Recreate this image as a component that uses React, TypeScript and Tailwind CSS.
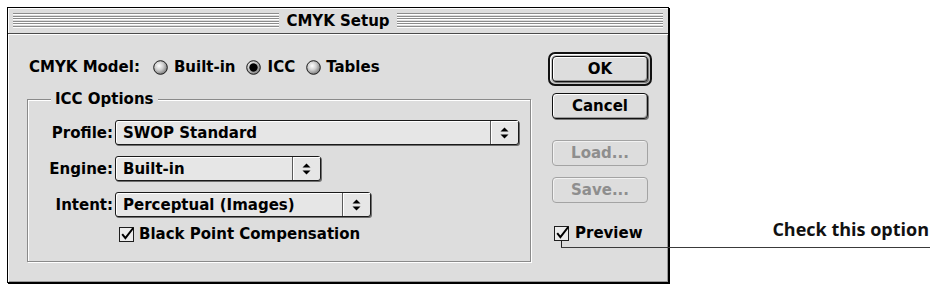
import React from "react";

const sysFont = "[font-family:'DejaVu_Sans',sans-serif] font-bold text-[15px] leading-[18px]";

function Radio({ checked, id }: { checked?: boolean; id: string }) {
  return (
    <svg width="15" height="15" viewBox="0 0 15 15" className="shrink-0">
      <defs>
        <radialGradient id={id} cx="40%" cy="38%" r="68%">
          <stop offset="0" stopColor="#ffffff" />
          <stop offset="0.45" stopColor="#d0d0d0" />
          <stop offset="1" stopColor="#6f6f6f" />
        </radialGradient>
      </defs>
      <circle cx="7.5" cy="7.5" r="6.8" fill={`url(#${id})`} stroke="#1a1a1a" strokeWidth="1" />
      {checked && <circle cx="7.5" cy="7.5" r="4.2" fill="#000" />}
    </svg>
  );
}

function CheckBox() {
  return (
    <svg width="16" height="16" viewBox="0 0 16 16" className="shrink-0">
      <rect x="0.5" y="1.5" width="14" height="14" fill="#ececec" stroke="#1e1e1e" />
      <path d="M3.2 8.2 L6.4 12.2 L14.2 2" fill="none" stroke="#000" strokeWidth="2" />
    </svg>
  );
}

function Arrows() {
  return (
    <svg width="9" height="12" viewBox="0 0 9 12">
      <path d="M0.5 4.5 L4.5 0.5 L8.5 4.5 Z" fill="#000" />
      <path d="M0.5 7.5 L4.5 11.5 L8.5 7.5 Z" fill="#000" />
    </svg>
  );
}

function Popup({ label, className }: { label: string; className: string }) {
  return (
    <div
      className={`flex h-[25px] items-stretch rounded-[3px] border border-[#1a1a1a] bg-[#e6e6e6] shadow-[1px_1px_0_#6e6e6e,inset_1px_1px_0_#ffffff] ${className}`}
    >
      <div className={`flex flex-1 items-center pl-[7px] text-black ${sysFont}`}>{label}</div>
      <div className="flex w-[28px] items-center justify-center border-l border-[#5a5a5a] shadow-[inset_1px_1px_0_#ffffff]">
        <Arrows />
      </div>
    </div>
  );
}

function Btn({ children, disabled }: { children: React.ReactNode; disabled?: boolean }) {
  return disabled ? (
    <div
      className={`flex h-[26px] w-[96px] items-center justify-center rounded-[4px] border border-[#a3a3a3] bg-[#dddddd] text-[#8e8e8e] shadow-[inset_1px_1px_0_#f2f2f2] ${sysFont}`}
    >
      {children}
    </div>
  ) : (
    <div
      className={`flex h-[26px] w-[96px] items-center justify-center rounded-[4px] border border-[#111111] bg-[#dddddd] text-black shadow-[inset_1px_1px_0_#ffffff,inset_-1px_-1px_0_#9a9a9a,1px_1px_0_#777777] ${sysFont}`}
    >
      {children}
    </div>
  );
}

function Stripes() {
  const rows = [0, 1, 2, 3, 4, 5];
  return (
    <div className="flex flex-1 flex-col">
      {rows.map((i) => (
        <div
          key={i}
          className={`h-[1px] bg-[#8c8c8c] shadow-[0_1px_0_#ffffff] ${i % 2 === 0 ? "mb-[2px]" : "mb-[1px]"}`}
        />
      ))}
    </div>
  );
}

export default function App() {
  return (
    <div className="min-h-screen bg-white">
      <div className="relative flex pl-[7px] pt-[7px]">
        {/* Window */}
        <div className="flex h-[276px] w-[662px] flex-col border border-black bg-[#dddddd] shadow-[1px_1px_0_#000000]">
          {/* Title bar */}
          <div className="flex h-[26px] items-center border-b border-[#4a4a4a] bg-[#dddddd] px-[5px] shadow-[inset_1px_1px_0_#ffffff]">
            <Stripes />
            <div className={`px-[7px] text-black ${sysFont}`}>CMYK Setup</div>
            <Stripes />
          </div>

          {/* Body */}
          <div className="flex flex-1 pl-[19px] pt-[18px] shadow-[inset_1px_1px_0_#ffffff,inset_-1px_-1px_0_#9a9a9a]">
            {/* Left column */}
            <div className="flex w-[504px] flex-col pt-[6px]">
              <div className={`ml-[2px] flex items-center text-black ${sysFont}`}>
                <span>CMYK Model:</span>
                <span className="ml-[13px] flex">
                  <Radio id="r1" />
                </span>
                <span className="ml-[6px]">Built-in</span>
                <span className="ml-[10px] flex">
                  <Radio id="r2" checked />
                </span>
                <span className="ml-[7px]">ICC</span>
                <span className="ml-[11px] flex">
                  <Radio id="r3" />
                </span>
                <span className="ml-[5px]">Tables</span>
              </div>

              {/* Group box */}
              <div className="relative mt-[23px] h-[163px] w-[504px] border border-[#8a8a8a] shadow-[1px_1px_0_#ffffff,inset_1px_1px_0_#ffffff]">
                <div className={`absolute -top-[10px] left-[23px] bg-[#dddddd] px-[4px] text-black ${sysFont}`}>
                  ICC Options
                </div>
                <div className={`grid grid-cols-[85px_1fr] items-center gap-x-[2px] gap-y-[11px] pt-[20px] text-black ${sysFont}`}>
                  <span className="text-right">Profile:</span>
                  <Popup label="SWOP Standard" className="w-[404px]" />
                  <span className="text-right">Engine:</span>
                  <Popup label="Built-in" className="w-[206px]" />
                  <span className="text-right">Intent:</span>
                  <Popup label="Perceptual (Images)" className="w-[256px]" />
                  <span />
                  <div className="mt-[-3px] flex items-center pl-[4px]">
                    <CheckBox />
                    <span className="ml-[4px]">Black Point Compensation</span>
                  </div>
                </div>
              </div>
            </div>

            {/* Right column */}
            <div className="ml-[17px] flex flex-col items-start">
              <div className="rounded-[7px] border-2 border-[#111111] bg-[#c6c6c6] p-[2px] shadow-[inset_1px_1px_0_#ffffff]">
                <Btn>OK</Btn>
              </div>
              <div className="ml-[4px] mt-[7px]">
                <Btn>Cancel</Btn>
              </div>
              <div className="ml-[4px] mt-[21px]">
                <Btn disabled>Load...</Btn>
              </div>
              <div className="ml-[4px] mt-[11px]">
                <Btn disabled>Save...</Btn>
              </div>
              <div className={`ml-[6px] mt-[21px] flex items-center text-black ${sysFont}`}>
                <CheckBox />
                <span className="ml-[5px]">Preview</span>
              </div>
            </div>
          </div>
        </div>

        {/* Callout label */}
        <div className="flex flex-1 justify-end pr-[5px] pt-[210px]">
          <span className="[font-family:'Open_Sans',sans-serif] text-[18px] font-bold leading-[24px] text-[#111111]">
            Check this option
          </span>
        </div>

        {/* Callout line (overlays window border) */}
        <div className="absolute left-[561px] top-[241px] h-[7px] w-[1px] bg-[#222222]" />
        <div className="absolute left-[561px] top-[247px] h-[1px] w-[369px] bg-[#3a3a3a]" />
      </div>
    </div>
  );
}
